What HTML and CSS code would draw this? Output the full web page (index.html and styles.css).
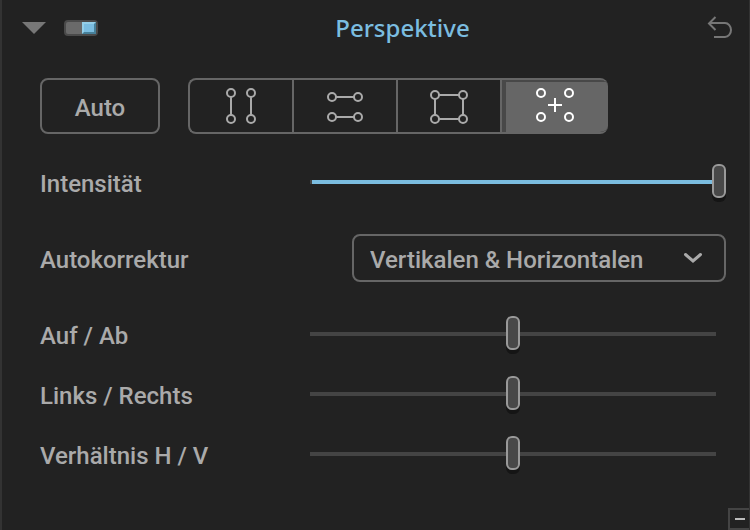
FILE: index.html
```html
<!DOCTYPE html>
<html lang="de">
<head>
<meta charset="UTF-8">
<meta name="viewport" content="width=device-width, initial-scale=1.0">
<title>Perspektive</title>
<link rel="stylesheet" href="styles.css">
</head>
<body>
<section class="panel">
    <header class="header">
        <div class="header-left">
            <button class="icon-btn" type="button" aria-label="Einklappen">
                <svg width="24" height="12" viewBox="0 0 24 12"><path d="M0 0h24L12 12z" fill="#777"/></svg>
            </button>
            <input class="switch" type="checkbox" aria-label="Perspektive aktiv" checked>
        </div>
        <h1>Perspektive</h1>
        <button class="icon-btn" type="button" aria-label="Zurücksetzen">
            <svg width="26" height="24" viewBox="0 0 26 24" fill="none" stroke="#777" stroke-width="2">
                <path d="M8.500 1L2 7.500L8.500 14M2 7h16a6 7 0 0 1 0 14H7"/>
            </svg>
        </button>
    </header>

    <div class="tools">
        <button class="auto" type="button">Auto</button>
        <div class="modes">
            <button class="mode" type="button" aria-label="Vertikal">
                <svg width="32" height="38" viewBox="0 0 32 38">
                    <path d="M6 10v18M26 10v18"/>
                    <circle cx="6" cy="6" r="4"/><circle cx="26" cy="6" r="4"/>
                    <circle cx="6" cy="32" r="4"/><circle cx="26" cy="32" r="4"/>
                </svg>
            </button>
            <button class="mode" type="button" aria-label="Horizontal">
                <svg width="38" height="32" viewBox="0 0 38 32">
                    <path d="M10 7h18M10 27h18"/>
                    <circle cx="6" cy="7" r="4"/><circle cx="32" cy="7" r="4"/>
                    <circle cx="6" cy="27" r="4"/><circle cx="32" cy="27" r="4"/>
                </svg>
            </button>
            <button class="mode" type="button" aria-label="Rechteck">
                <svg width="40" height="36" viewBox="0 0 40 36">
                    <path d="M10 7h20M10 31h20M6 11v16M34 11v16"/>
                    <circle cx="6" cy="7" r="4"/><circle cx="34" cy="7" r="4"/>
                    <circle cx="6" cy="31" r="4"/><circle cx="34" cy="31" r="4"/>
                </svg>
            </button>
            <button class="mode active" type="button" aria-label="Punkte">
                <svg width="40" height="36" viewBox="0 0 40 36">
                    <path d="M18 10v14M11 17h14"/>
                    <circle cx="4" cy="5" r="4"/><circle cx="32" cy="5" r="4"/>
                    <circle cx="4" cy="29" r="4"/><circle cx="32" cy="29" r="4"/>
                </svg>
            </button>
        </div>
    </div>

    <div class="row">
        <label for="intensity">Intensität</label>
        <input class="slider full" id="intensity" type="range" min="0" max="100" value="100">
    </div>
    <div class="row row-select">
        <label for="correction">Autokorrektur</label>
        <div class="select">
            <select id="correction">
                <option>Vertikalen &amp; Horizontalen</option>
            </select>
            <svg class="chevron" width="20" height="12" viewBox="0 0 20 12"><path d="M2.500 2.500L10 9l7.500-6.500" fill="none" stroke="#aaa" stroke-width="3" stroke-linecap="round"/></svg>
        </div>
    </div>
    <div class="row">
        <label for="updown">Auf / Ab</label>
        <input class="slider" id="updown" type="range" min="-100" max="100" value="0">
    </div>
    <div class="row">
        <label for="leftright">Links / Rechts</label>
        <input class="slider" id="leftright" type="range" min="-100" max="100" value="0">
    </div>
    <div class="row">
        <label for="ratio">Verhältnis H / V</label>
        <input class="slider" id="ratio" type="range" min="-100" max="100" value="0">
    </div>

    <footer class="footer">
        <button class="minus" type="button" aria-label="Weniger"></button>
    </footer>
</section>
</body>
</html>
```
FILE: styles.css
```css
*, *::before {
    box-sizing: border-box;
}
body {
    margin: 0;
    background-color: #222;
    color: #aaa;
    font-family: Roboto, sans-serif;
    font-size: 24px;
    font-weight: 500;
}
button, select {
    font: inherit;
    color: inherit;
    background: transparent;
    border: none;
    padding: 0;
    cursor: pointer;
}
svg {
    display: block;
    overflow: visible;
}

.panel {
    display: flex;
    flex-direction: column;
    min-height: 100vh;
    border-left: 2px solid #333;
    border-right: 1px solid #333;
}

/* header */
.header {
    display: flex;
    align-items: center;
    height: 56px;
    padding: 0 16px 0 20px;
}
.header-left {
    display: flex;
    align-items: center;
    gap: 18px;
}
h1 {
    flex: 1;
    margin: 0;
    padding-bottom: 2px;
    text-align: center;
    color: #7bbde0;
    font-family: "Noto Sans", sans-serif;
    font-size: 24px;
    font-weight: 500;
}
.switch {
    appearance: none;
    width: 34px;
    height: 16px;
    margin: 0;
    border: 2px solid #4a4a4a;
    border-radius: 4px;
    background-color: #6a6a6a;
}
.switch:checked::before {
    content: "";
    display: block;
    width: 14px;
    height: 12px;
    margin-left: auto;
    border: 2px solid;
    border-color: #95cfe8 #478099 #478099 #95cfe8;
    background-color: #7bbde0;
}

/* buttons */
.tools {
    display: flex;
    gap: 28px;
    padding: 22px 24px 18px 38px;
}
.auto {
    width: 120px;
    height: 56px;
    padding-top: 3px;
    border: 2px solid #666;
    border-radius: 8px;
}
.modes {
    display: flex;
    height: 56px;
    border: 2px solid #666;
    border-right: none;
    border-radius: 8px;
    overflow: hidden;
}
.mode {
    display: flex;
    align-items: center;
    justify-content: center;
    width: 104px;
    border-right: 2px solid #666;
}
.mode svg {
    fill: none;
    stroke: #aaa;
    stroke-width: 2;
}
.mode.active {
    width: 106px;
    border-right: none;
    border-left: 4px solid #484848;
    box-shadow: inset 0 2px #484848;
    background-color: #666;
}
.mode.active svg {
    stroke: #fff;
}

/* rows */
.row {
    display: grid;
    grid-template-columns: 260px 1fr;
    align-items: center;
    height: 60px;
    padding: 0 23px 0 38px;
}
.row label {
    padding-top: 4px;
}
.row-select {
    grid-template-columns: 312px 1fr;
    height: 92px;
}
.select {
    position: relative;
}
.select select {
    appearance: none;
    width: 100%;
    height: 48px;
    padding: 3px 48px 0 16px;
    border: 2px solid #666;
    border-radius: 8px;
}
.chevron {
    position: absolute;
    right: 23px;
    top: 18px;
    pointer-events: none;
}

.slider {
    appearance: none;
    width: 100%;
    height: 44px;
    margin: 0;
    background: linear-gradient(#444, #444) center / calc(100% - 20px) 4px no-repeat;
}
.slider.full {
    background-image: linear-gradient(90deg, #444 2px, #7bbde0 2px);
}
.slider::-webkit-slider-thumb {
    appearance: none;
    width: 14px;
    height: 34px;
    margin-bottom: 2px;
    border: 2px solid #999;
    border-radius: 6px;
    background-color: #484848;
    box-shadow: 0 4px #151515;
}

.footer {
    display: flex;
    justify-content: flex-end;
    margin-top: auto;
}
.minus {
    display: grid;
    place-items: center;
    width: 21px;
    height: 22px;
    border: 2px solid #444;
    border-right: none;
}
.minus::before {
    content: "";
    width: 10px;
    height: 2px;
    background-color: #bbb;
}
```
